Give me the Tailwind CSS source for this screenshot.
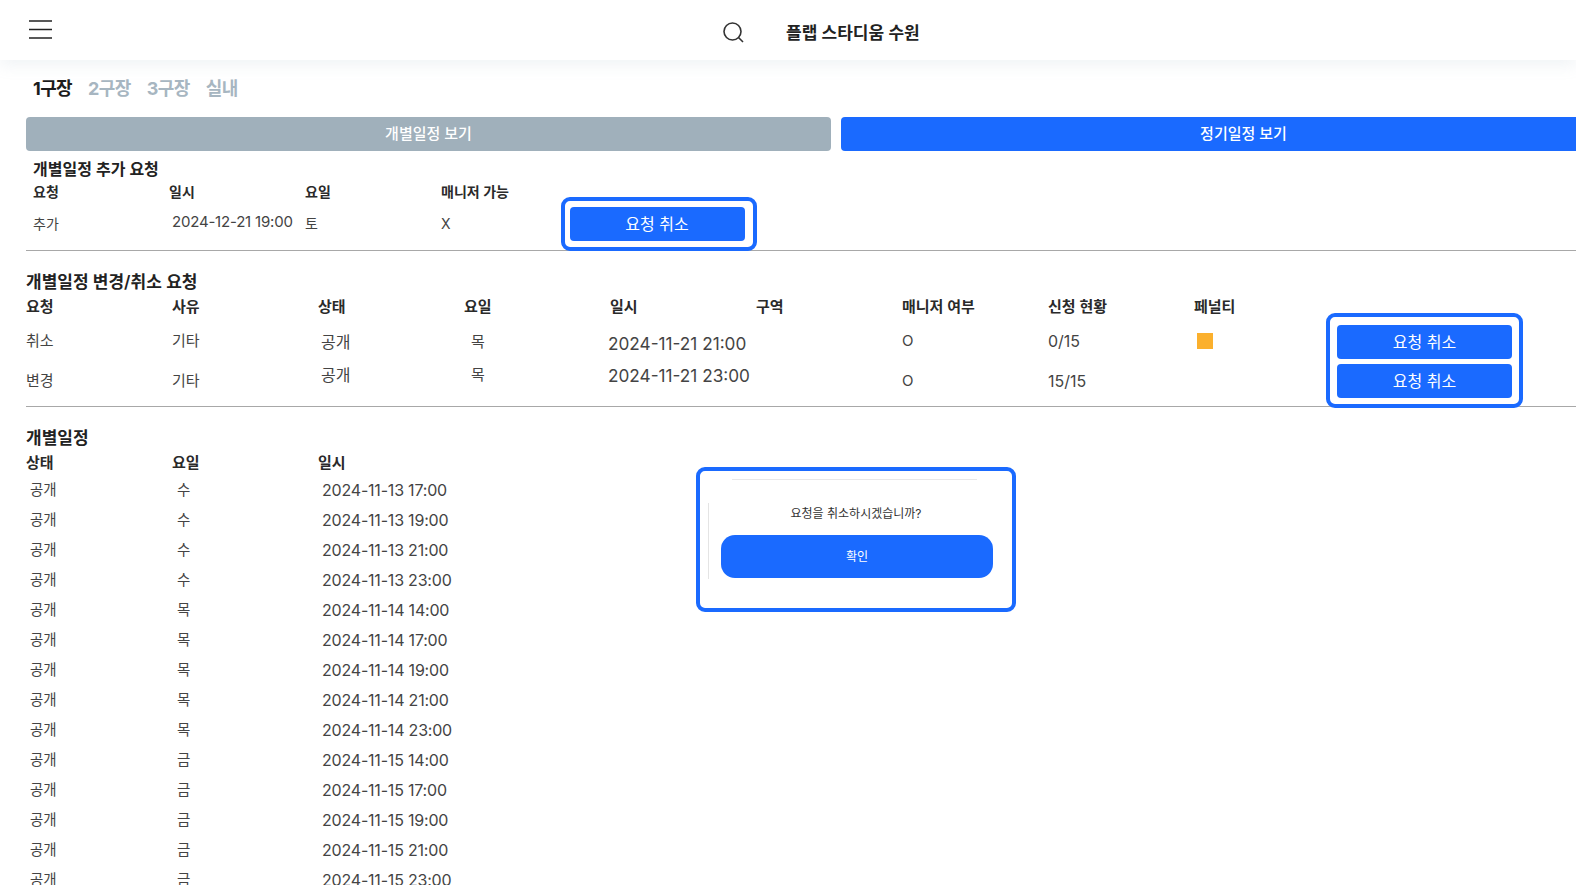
<!DOCTYPE html>
<html lang="ko"><head><meta charset="utf-8"><script src="https://cdn.jsdelivr.net/npm/@tailwindcss/browser@4"></script></head>
<body class="bg-white">
<div class="relative w-[1576px] h-[885px] overflow-hidden font-['Inter','Noto_Sans_CJK_KR',sans-serif] text-[#444]">
  <header class="h-[60px] flex items-center bg-white shadow-[0_6px_14px_rgba(150,170,185,0.13)]">
    <svg class="ml-[29px] mb-[2px] w-[24px] h-[20px]" viewBox="0 0 24 20" fill="none" stroke="#222" stroke-width="1.4"><path d="M0 2h23M0 10.5h23M0 19h23"/></svg>
    <svg class="ml-[670px] mt-[5px] w-[21px] h-[21px]" viewBox="0 0 21 21" fill="none" stroke="#333" stroke-width="1.6"><circle cx="9.5" cy="9.5" r="8.5"/><path d="M15.5 15.5l4.5 4.5"/></svg>
    <span class="ml-[42px] mt-[8px] text-[17px] font-semibold text-[#222]">플랩 스타디움 수원</span>
  </header>
  <nav class="h-[57px] pl-[33px] pt-[17px] flex gap-[16px] text-[18px] leading-[24px] font-bold tracking-[-0.6px] text-[#a7b6c1]">
    <span class="text-[#1c1c1c]">1구장</span><span>2구장</span><span>3구장</span><span>실내</span>
  </nav>
  <div class="flex gap-[10px] pl-[26px] w-[1700px] text-[15px] font-medium text-white">
    <div class="w-[805px] h-[34px] rounded-[4px] bg-[#a0b0bb] flex items-center justify-center">개별일정 보기</div>
    <div class="w-[805px] h-[34px] rounded-[4px] bg-[#1a6aff] flex items-center justify-center">정기일정 보기</div>
  </div>

  <section class="relative h-[100px] ml-[26px] border-b border-[#a8a8a8]">
    <h2 class="pl-[7px] pt-[7px] h-[28px] text-[16px] leading-[22px] font-semibold text-[#222]">개별일정 추가 요청</h2>
    <div class="grid grid-cols-[136px_136px_136px_136px] pl-[7px] h-[24px] items-center text-[14px] font-semibold text-[#2a2a2a]">
      <span>요청</span><span>일시</span><span>요일</span><span>매니저 가능</span>
    </div>
    <div class="grid grid-cols-[136px_136px_136px_136px] pl-[7px] pt-[2px] h-[39px] items-center text-[14px]">
      <span>추가</span><span class="pl-[3px] mb-[2px] text-[15px] tracking-[-0.2px]">2024-12-21 19:00</span><span>토</span><span>X</span>
    </div>
    <div class="absolute left-[535px] top-[46px] w-[196px] h-[54px] pr-[4px] border-[4px] border-[#1a6aff] rounded-[9px] bg-white flex items-center justify-center">
      <button class="w-[175px] h-[34px] rounded-[4px] bg-[#1a6aff] text-white text-[16px]">요청 취소</button>
    </div>
  </section>

  <section class="relative h-[156px] ml-[26px] border-b border-[#a8a8a8]">
    <h2 class="pt-[19px] h-[44px] text-[17px] leading-[24px] font-semibold text-[#222]">개별일정 변경/취소 요청</h2>
    <div class="grid grid-cols-[repeat(9,146px)] h-[24px] items-center text-[15px] font-semibold text-[#2a2a2a]">
      <span>요청</span><span>사유</span><span>상태</span><span>요일</span><span>일시</span><span>구역</span><span>매니저 여부</span><span>신청 현황</span><span>페널티</span>
    </div>
    <div class="grid grid-cols-[repeat(9,146px)] grid-rows-[40px_40px] pt-[2px] items-center text-[15px]">
      <span>취소</span><span>기타</span><span class="pl-[3px] mt-[2px] text-[16px]">공개</span><span class="pl-[7px] mt-[2px]">목</span><span class="text-[17.2px] -ml-[2px] mt-[6px]">2024-11-21 21:00</span><span></span><span>O</span><span class="text-[16px]">0/15</span><span class="pl-[3px]"><span class="block w-[16px] h-[16px] mb-[1px] bg-[#fbb02d]"></span></span>
      <span>변경</span><span>기타</span><span class="pl-[3px] mb-[12px] text-[16px]">공개</span><span class="pl-[7px] mb-[12px]">목</span><span class="mb-[10px] text-[17.2px] -ml-[2px]">2024-11-21 23:00</span><span></span><span>O</span><span class="text-[16px]">15/15</span><span></span>
    </div>
    <div class="absolute left-[1300px] top-[62px] w-[197px] h-[95px] pt-[2px] border-[4px] border-[#1a6aff] rounded-[9px] bg-white flex flex-col items-center justify-center gap-[5px]">
      <button class="w-[175px] h-[34px] rounded-[4px] bg-[#1a6aff] text-white text-[16px]">요청 취소</button>
      <button class="w-[175px] h-[34px] rounded-[4px] bg-[#1a6aff] text-white text-[16px]">요청 취소</button>
    </div>
  </section>

  <section class="ml-[26px]">
    <h2 class="pt-[19px] h-[44px] text-[17px] leading-[24px] font-semibold text-[#222]">개별일정</h2>
    <div class="grid grid-cols-[146px_146px_146px] h-[24px] items-center text-[15px] font-semibold text-[#2a2a2a]">
      <span>상태</span><span>요일</span><span>일시</span>
    </div>
    <div class="grid grid-cols-[146px_146px_200px] auto-rows-[30px] items-center text-[14.5px]">
      <span class="pl-[4px]">공개</span><span class="pl-[5px]">수</span><span class="pl-[4px] text-[16px] tracking-[-0.2px]">2024-11-13 17:00</span>
      <span class="pl-[4px]">공개</span><span class="pl-[5px]">수</span><span class="pl-[4px] text-[16px] tracking-[-0.2px]">2024-11-13 19:00</span>
      <span class="pl-[4px]">공개</span><span class="pl-[5px]">수</span><span class="pl-[4px] text-[16px] tracking-[-0.2px]">2024-11-13 21:00</span>
      <span class="pl-[4px]">공개</span><span class="pl-[5px]">수</span><span class="pl-[4px] text-[16px] tracking-[-0.2px]">2024-11-13 23:00</span>
      <span class="pl-[4px]">공개</span><span class="pl-[5px]">목</span><span class="pl-[4px] text-[16px] tracking-[-0.2px]">2024-11-14 14:00</span>
      <span class="pl-[4px]">공개</span><span class="pl-[5px]">목</span><span class="pl-[4px] text-[16px] tracking-[-0.2px]">2024-11-14 17:00</span>
      <span class="pl-[4px]">공개</span><span class="pl-[5px]">목</span><span class="pl-[4px] text-[16px] tracking-[-0.2px]">2024-11-14 19:00</span>
      <span class="pl-[4px]">공개</span><span class="pl-[5px]">목</span><span class="pl-[4px] text-[16px] tracking-[-0.2px]">2024-11-14 21:00</span>
      <span class="pl-[4px]">공개</span><span class="pl-[5px]">목</span><span class="pl-[4px] text-[16px] tracking-[-0.2px]">2024-11-14 23:00</span>
      <span class="pl-[4px]">공개</span><span class="pl-[5px]">금</span><span class="pl-[4px] text-[16px] tracking-[-0.2px]">2024-11-15 14:00</span>
      <span class="pl-[4px]">공개</span><span class="pl-[5px]">금</span><span class="pl-[4px] text-[16px] tracking-[-0.2px]">2024-11-15 17:00</span>
      <span class="pl-[4px]">공개</span><span class="pl-[5px]">금</span><span class="pl-[4px] text-[16px] tracking-[-0.2px]">2024-11-15 19:00</span>
      <span class="pl-[4px]">공개</span><span class="pl-[5px]">금</span><span class="pl-[4px] text-[16px] tracking-[-0.2px]">2024-11-15 21:00</span>
      <span class="pl-[4px]">공개</span><span class="pl-[5px]">금</span><span class="pl-[4px] text-[16px] tracking-[-0.2px]">2024-11-15 23:00</span>
    </div>
  </section>

  <div class="absolute left-[696px] top-[467px] w-[320px] h-[145px] border-[4px] border-[#1a6aff] rounded-[9px] bg-white">
    <div class="absolute left-[32px] top-[8px] w-[245px] border-t border-[#e8e8e8]"></div>
    <div class="absolute left-[8px] top-[32px] h-[76px] border-l border-[#e4e4e4]"></div>
    <p class="pt-[35px] text-center text-[12px] leading-[16px] text-[#333]">요청을 취소하시겠습니까?</p>
    <button class="block ml-[21px] mt-[13px] w-[272px] h-[43px] rounded-[14px] bg-[#1a6aff] text-white text-[12px]">확인</button>
  </div>
</div>
</body></html>
